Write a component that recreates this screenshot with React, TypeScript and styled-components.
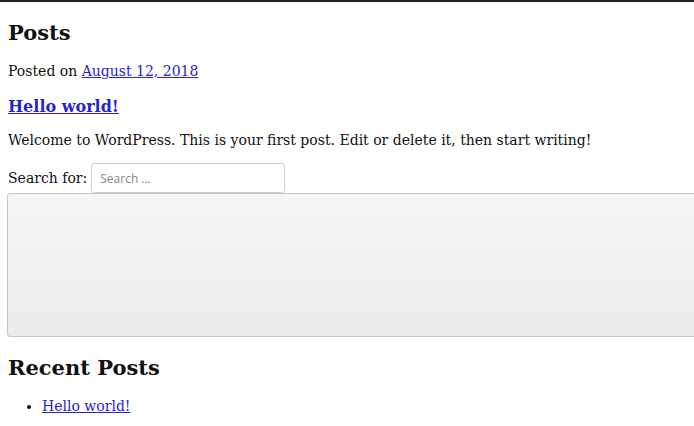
import React from 'react';
import styled, { createGlobalStyle } from 'styled-components';

const GlobalStyle = createGlobalStyle`
  html, body {
    margin: 0;
    padding: 0;
    background: #fff;
  }
  body {
    font-family: "DejaVu Serif", serif;
    font-size: 14px;
    line-height: 20px;
    color: #111;
    border-top: 2px solid #222;
    overflow: hidden;
  }
`;

const Page = styled.div`
  padding: 18px 0 0 8px;
`;

const SectionTitle = styled.h2`
  font-size: 21px;
  line-height: 25px;
  font-weight: bold;
  margin: 0 0 16px;
`;

const Meta = styled.p`
  margin: 0 0 16px;
`;

const Link = styled.a`
  color: #2525d0;
  text-decoration: underline;
`;

const PostTitle = styled.h3`
  font-size: 16px;
  line-height: 20px;
  margin: 0 0 13px;
`;

const PostBody = styled.p`
  margin: 0 0 13px;
`;

const SearchForm = styled.form`
  display: flex;
  flex-direction: column;
  align-items: flex-start;
`;

const SearchRow = styled.label`
  display: flex;
  align-items: center;
  gap: 4px;
  height: 30px;
`;

const SearchInput = styled.input`
  width: 194px;
  height: 30px;
  box-sizing: border-box;
  border: 1px solid #ccc;
  border-radius: 3px;
  padding: 0 8px;
  font-family: "Open Sans", sans-serif;
  font-size: 12px;
  color: #333;
  &::placeholder {
    color: #888;
  }
`;

const SearchSubmit = styled.button`
  width: calc(100% + 40px);
  height: 144px;
  margin-left: -1px;
  border: 1px solid #c8c8c8;
  border-radius: 3px;
  background: linear-gradient(#f5f5f5, #ebebeb);
`;

const Widget = styled.section`
  margin-top: 18px;
`;

const List = styled.ul`
  margin: 0;
  padding-left: 34px;
`;

export default function App() {
  return (
    <>
      <GlobalStyle />
      <Page>
        <SectionTitle>Posts</SectionTitle>
        <Meta>
          Posted on <Link href="#">August 12, 2018</Link>
        </Meta>
        <PostTitle>
          <Link href="#">Hello world!</Link>
        </PostTitle>
        <PostBody>
          Welcome to WordPress. This is your first post. Edit or delete it, then start writing!
        </PostBody>
        <SearchForm>
          <SearchRow>
            Search for: <SearchInput type="search" placeholder="Search …" />
          </SearchRow>
          <SearchSubmit type="submit" aria-label="Search" />
        </SearchForm>
        <Widget>
          <SectionTitle>Recent Posts</SectionTitle>
          <List>
            <li>
              <Link href="#">Hello world!</Link>
            </li>
          </List>
        </Widget>
      </Page>
    </>
  );
}
